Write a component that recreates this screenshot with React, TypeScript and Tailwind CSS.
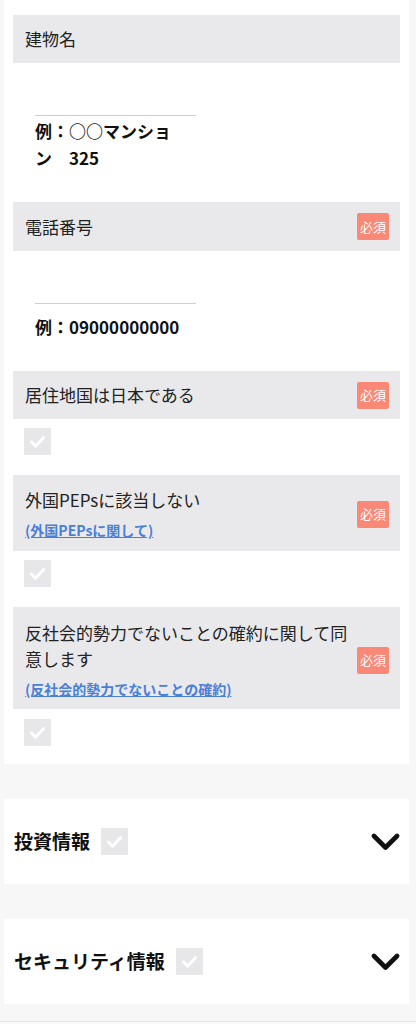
import type { ReactNode } from "react";

const font = {
	fontFamily: '"Noto Sans CJK JP", "Noto Sans", sans-serif',
};

function CheckBox() {
	return (
		<div className="flex h-[27px] w-[27px] items-center justify-center bg-[#e7e7e9]">
			<svg width="27" height="27" viewBox="0 0 27 27" fill="none">
				<path
					d="M7.5 14l4 4.2 8-8.5"
					stroke="#ffffff"
					strokeWidth="3"
					strokeLinecap="round"
					strokeLinejoin="round"
				/>
			</svg>
		</div>
	);
}

function Required() {
	return (
		<span className="ml-2 flex h-[27px] w-[32px] shrink-0 items-center justify-center rounded-[2px] bg-[#fa8877] text-[13px] text-white">
			必須
		</span>
	);
}

function Heading({
	children,
	required,
	className,
}: {
	children: ReactNode;
	required?: boolean;
	className?: string;
}) {
	return (
		<div
			className={`flex items-center bg-[#e9e9eb] pl-[12px] pr-[11px] ${className ?? ""}`}
		>
			<div className="flex-1">{children}</div>
			{required && <Required />}
		</div>
	);
}

function Chevron() {
	return (
		<svg width="29" height="18" viewBox="0 0 29 18" fill="none">
			<path
				d="M3 3l11.5 11.5L26 3"
				stroke="#111111"
				strokeWidth="4.6"
				strokeLinecap="round"
				strokeLinejoin="round"
			/>
		</svg>
	);
}

function AccordionCard({ title }: { title: string }) {
	return (
		<div className="ml-[4px] mr-[7px] flex h-[85px] items-center bg-white pl-[10px] pr-[9px]">
			<span className="text-[19px] font-bold text-[#111]">{title}</span>
			<div className="ml-[11px]">
				<CheckBox />
			</div>
			<div className="ml-auto">
				<Chevron />
			</div>
		</div>
	);
}

export default function App() {
	return (
		<div className="min-h-[1024px] bg-[#f7f7f7] text-[#222]" style={font}>
			<div className="ml-[4px] mr-[7px] bg-white px-[9px] pb-[18px] pt-[15px]">
				{/* 建物名 */}
				<Heading className="h-[48px]">
					<span className="text-[17px]">建物名</span>
				</Heading>
				<div className="ml-[22px] mt-[52px] w-[161px]">
					<div className="border-t border-[#cfcfd3]" />
					<p className="mt-[1px] text-[17px] font-bold leading-[27px] text-[#111]">
						例：○○マンショ
						<br />
						ン　325
					</p>
				</div>

				{/* 電話番号 */}
				<Heading className="mt-[31px] h-[49px]" required>
					<span className="text-[17px]">電話番号</span>
				</Heading>
				<div className="ml-[22px] mt-[52px] w-[161px]">
					<div className="border-t border-[#cfcfd3]" />
					<p className="mt-[9px] whitespace-nowrap text-[17px] font-bold leading-[27px] text-[#111]">
						例：09000000000
					</p>
				</div>

				{/* 居住地国 */}
				<Heading className="mt-[31px] h-[48px]" required>
					<span className="text-[17px]">居住地国は日本である</span>
				</Heading>
				<div className="ml-[11px] mt-[9px]">
					<CheckBox />
				</div>

				{/* PEPs */}
				<Heading className="mt-[20px] pb-[10px] pt-[12px]" required>
					<p className="text-[17px] leading-[26px]">外国PEPsに該当しない</p>
					<a className="mt-[6px] block text-[14px] font-bold leading-[22px] text-[#4a7fd8] underline">
						(外国PEPsに関して)
					</a>
				</Heading>
				<div className="ml-[11px] mt-[9px]">
					<CheckBox />
				</div>

				{/* 反社会的勢力 */}
				<Heading className="mt-[20px] pb-[9px] pt-[13px]" required>
					<p className="text-[17px] leading-[26px]">
						反社会的勢力でないことの確約に関して同意します
					</p>
					<a className="mt-[6px] block text-[14px] font-bold leading-[22px] text-[#4a7fd8] underline">
						(反社会的勢力でないことの確約)
					</a>
				</Heading>
				<div className="ml-[11px] mt-[10px]">
					<CheckBox />
				</div>
			</div>

			<div className="mt-[35px]">
				<AccordionCard title="投資情報" />
			</div>
			<div className="mt-[35px]">
				<AccordionCard title="セキュリティ情報" />
			</div>
			<div className="mt-[17px] h-[4px] border-t border-[#e4e4e4] bg-[#fafafa]" />
		</div>
	);
}
